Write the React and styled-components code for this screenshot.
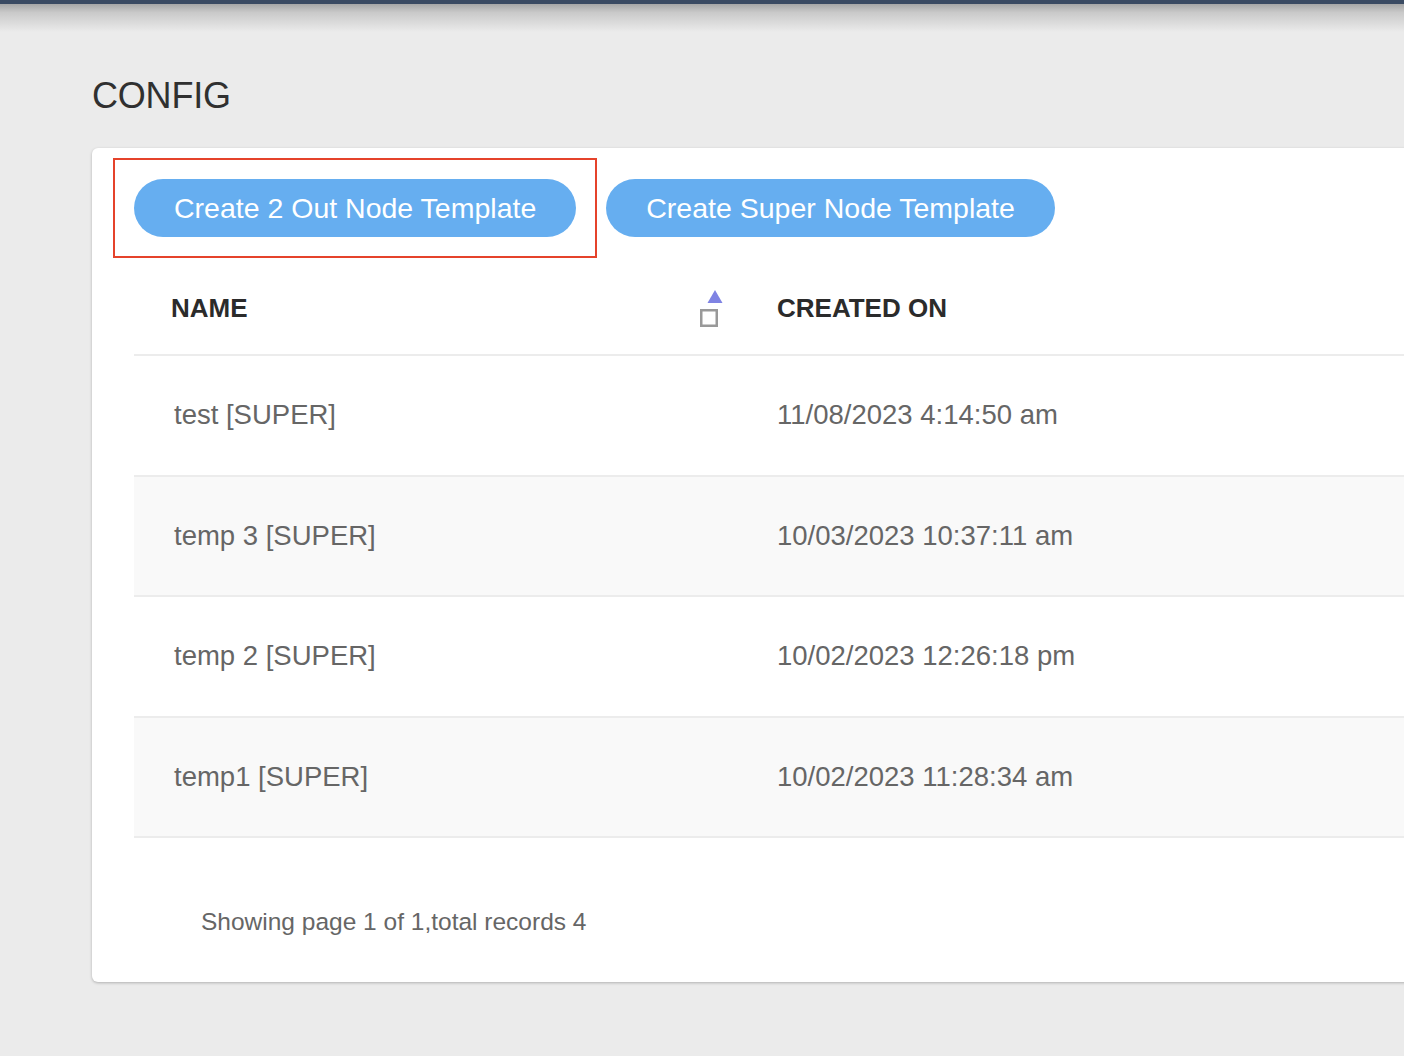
import React from "react"
import styled, { createGlobalStyle } from "styled-components"

const GlobalStyle = createGlobalStyle`
  html, body {
    margin: 0;
    padding: 0;
    background: #ebebeb;
    overflow: hidden;
    font-family: "Liberation Sans", Arial, sans-serif;
  }
`

const Page = styled.div`
  width: 1404px;
  min-height: 1056px;
  overflow: hidden;
  background: #ebebeb;
`

const TopBar = styled.div`
  height: 4px;
  background: #3a4a62;
`

const TopShade = styled.div`
  height: 28px;
  background: linear-gradient(#a6a6a6, #c9c9c9 30%, #ebebeb);
`

const Content = styled.div`
  padding-left: 92px;
`

const Title = styled.h1`
  margin: 46px 0 34px;
  font-size: 36px;
  line-height: 36px;
  font-weight: 400;
  color: #303030;
  letter-spacing: -0.2px;
`

const Card = styled.div`
  width: 1340px;
  background: #fff;
  border-radius: 6px;
  box-shadow: 0 1px 3px rgba(0, 0, 0, 0.25);
  padding: 31px 0 46px 42px;
`

const Toolbar = styled.div`
  display: flex;
  gap: 30px;
  margin-bottom: 21px;
`

const Button = styled.button`
  position: relative;
  height: 58px;
  padding: 0 40px;
  border: none;
  border-radius: 29px;
  background: #66aef0;
  color: #fff;
  font-family: inherit;
  font-size: 28.5px;
  cursor: pointer;

  /* red highlight frame drawn over the page */
  &::after {
    content: "";
    display: ${p => (p.$marked ? "block" : "none")};
    position: absolute;
    inset: -21px;
    border: 2px solid #e5432b;
    pointer-events: none;
  }
`

const Row = styled.div`
  display: grid;
  grid-template-columns: 606px 1fr;
  align-items: center;
  height: ${p => (p.$head ? "98px" : "120.5px")};
  padding-top: ${p => (p.$head ? "4px" : "0")};
  border-bottom: 2px solid #ececec;
  background: ${p => (p.$striped ? "#f9f9f9" : "#fff")};
  box-sizing: border-box;
`

const HeadCell = styled.div`
  display: flex;
  align-items: center;
  justify-content: space-between;
  padding-left: 37px;
  padding-right: 17px;
  font-size: 26px;
  font-weight: 700;
  color: #2b2b2b;
`

const Cell = styled.div`
  padding-left: ${p => (p.$first ? "40px" : "37px")};
  font-size: 27.5px;
  color: #666;
`

const SortIcon = () => (
  <svg width="24" height="42" viewBox="0 0 24 42" style={{ marginTop: -4 }}>
    <polygon points="16,5 23.5,18 8.5,18" fill="#7f83e3" />
    <rect x="2.25" y="25.25" width="15.5" height="15.5" fill="none" stroke="#999" strokeWidth="2.5" />
  </svg>
)

const Footer = styled.div`
  padding: 70px 0 0 67px;
  font-size: 24.5px;
  line-height: 28px;
  color: #666;
`

const rows = [
  { name: "test [SUPER]", created: "11/08/2023 4:14:50 am" },
  { name: "temp 3 [SUPER]", created: "10/03/2023 10:37:11 am" },
  { name: "temp 2 [SUPER]", created: "10/02/2023 12:26:18 pm" },
  { name: "temp1 [SUPER]", created: "10/02/2023 11:28:34 am" },
]

export default function App() {
  return (
    <Page>
      <GlobalStyle />
      <TopBar />
      <TopShade />
      <Content>
        <Title>CONFIG</Title>
        <Card>
          <Toolbar>
            <Button $marked>Create 2 Out Node Template</Button>
            <Button>Create Super Node Template</Button>
          </Toolbar>
          <Row $head>
            <HeadCell>
              NAME
              <SortIcon />
            </HeadCell>
            <HeadCell>CREATED ON</HeadCell>
          </Row>
          {rows.map((r, i) => (
            <Row key={r.name} $striped={i % 2 === 1}>
              <Cell $first>{r.name}</Cell>
              <Cell>{r.created}</Cell>
            </Row>
          ))}
          <Footer>Showing page 1 of 1,total records 4</Footer>
        </Card>
      </Content>
    </Page>
  )
}
